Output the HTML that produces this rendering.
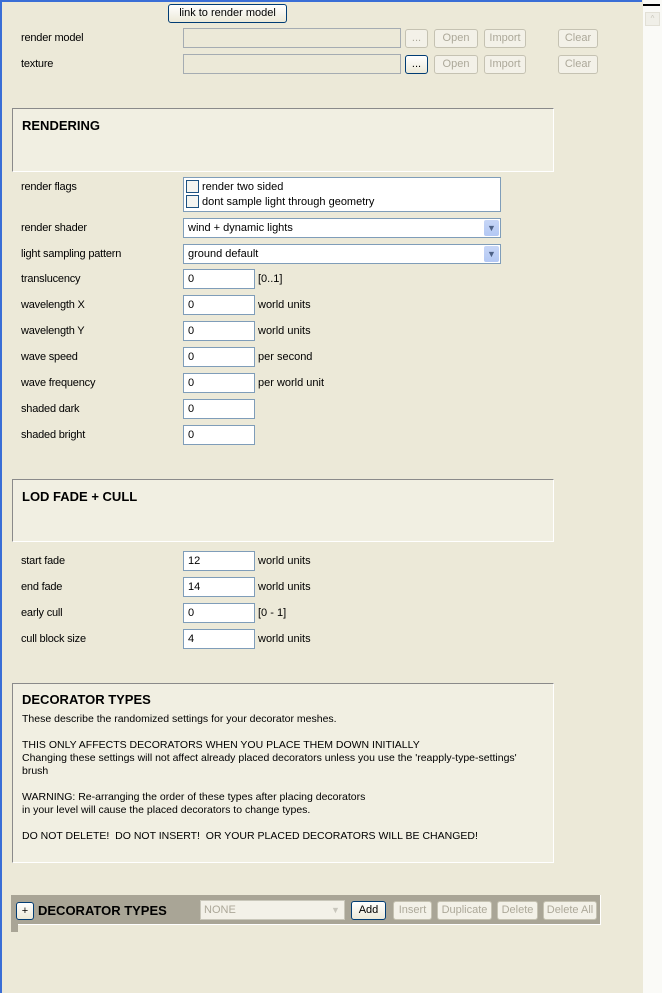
<!DOCTYPE html>
<html><head><meta charset="utf-8"><style>
*{box-sizing:border-box;margin:0;padding:0}
body{width:662px;height:993px;background:#ece9d8;font-family:"Liberation Sans",sans-serif;font-size:11px;color:#000;position:relative;overflow:hidden}
.a{position:absolute}
.lbl{position:absolute;left:21px;font-size:11px;letter-spacing:-0.2px}
.inp{position:absolute;background:#fff;border:1px solid #7f9db9;height:20px;padding:0 4px;font-size:11px;line-height:18px}
.dis{background:#ece9d8;border:1px solid #a5acb2}
.btn{position:absolute;height:19px;border:1px solid #c5c2b2;border-radius:3px;background:#f3f1e8;color:#aca899;text-align:center;line-height:17px;font-size:11px}
.btnA{border:1px solid #003c74;color:#000;background:linear-gradient(#fff,#ece9d8)}
.unit{position:absolute;left:258px;font-size:11px}
.panel{position:absolute;left:12px;width:542px;background:#f1efe2;border-top:1px solid #8a8a8a;border-left:1px solid #8a8a8a;border-right:1px solid #fff;border-bottom:1px solid #fff}
.panel h2{font-size:13px;font-weight:bold;position:absolute;left:9px;top:9px}
.sel{position:absolute;left:183px;width:318px;height:20px;background:#fff;border:1px solid #7f9db9;padding:0 4px;line-height:18px}
.arr{position:absolute;right:1px;top:1px;width:15px;height:16px;background:linear-gradient(#c7d6f6,#b3c8f4);border-radius:2px;color:#4d6185;font-size:9px;text-align:center;line-height:16px}
.cb{display:inline-block;width:13px;height:13px;border:1px solid #1c5180;background:#f4f4f0;vertical-align:-3px;margin-right:3px}
</style></head><body>
<div class="a" style="left:0;top:0;width:2px;height:993px;background:#3a6ed6"></div>
<div class="a" style="left:0;top:0;width:642px;height:2px;background:#3a6ed6"></div>
<div class="a" style="left:643px;top:0;width:19px;height:993px;background:#fafaf7"></div>
<div class="a" style="left:643px;top:4px;width:17px;height:2px;background:#000"></div>
<div class="a" style="left:645px;top:12px;width:15px;height:14px;background:#f0efe8;border:1px solid #e2e0d6;color:#c8c6bc;font-size:8px;text-align:center;line-height:12px">^</div>

<div class="btn btnA" style="left:168px;top:4px;width:119px;height:19px;border-radius:3px">link to render model</div>
<div class="lbl" style="top:32px">render model</div>
<div class="inp dis" style="left:183px;top:28px;width:218px"></div>
<div class="btn" style="left:405px;top:29px;width:23px">...</div>
<div class="btn" style="left:434px;top:29px;width:44px">Open</div>
<div class="btn" style="left:484px;top:29px;width:42px">Import</div>
<div class="btn" style="left:558px;top:29px;width:40px">Clear</div>
<div class="lbl" style="top:58px">texture</div>
<div class="inp dis" style="left:183px;top:54px;width:218px"></div>
<div class="btn btnA" style="left:405px;top:55px;width:23px">...</div>
<div class="btn" style="left:434px;top:55px;width:44px">Open</div>
<div class="btn" style="left:484px;top:55px;width:42px">Import</div>
<div class="btn" style="left:558px;top:55px;width:40px">Clear</div>

<div class="panel" style="top:108px;height:64px"><h2>RENDERING</h2></div>
<div class="lbl" style="top:181px">render flags</div>
<div class="a" style="left:183px;top:177px;width:318px;height:35px;background:#fff;border:1px solid #7f9db9;padding:2px 2px;line-height:15px"><div><span class="cb"></span>render two sided</div><div><span class="cb"></span>dont sample light through geometry</div></div>
<div class="lbl" style="top:222px">render shader</div>
<div class="sel" style="top:218px">wind + dynamic lights<div class="arr">&#9660;</div></div>
<div class="lbl" style="top:248px">light sampling pattern</div>
<div class="sel" style="top:244px">ground default<div class="arr">&#9660;</div></div>

<div class="lbl" style="top:273px">translucency</div><div class="inp" style="left:183px;top:269px;width:72px">0</div><div class="unit" style="top:273px">[0..1]</div>
<div class="lbl" style="top:299px">wavelength X</div><div class="inp" style="left:183px;top:295px;width:72px">0</div><div class="unit" style="top:299px">world units</div>
<div class="lbl" style="top:325px">wavelength Y</div><div class="inp" style="left:183px;top:321px;width:72px">0</div><div class="unit" style="top:325px">world units</div>
<div class="lbl" style="top:351px">wave speed</div><div class="inp" style="left:183px;top:347px;width:72px">0</div><div class="unit" style="top:351px">per second</div>
<div class="lbl" style="top:377px">wave frequency</div><div class="inp" style="left:183px;top:373px;width:72px">0</div><div class="unit" style="top:377px">per world unit</div>
<div class="lbl" style="top:403px">shaded dark</div><div class="inp" style="left:183px;top:399px;width:72px">0</div>
<div class="lbl" style="top:429px">shaded bright</div><div class="inp" style="left:183px;top:425px;width:72px">0</div>

<div class="panel" style="top:479px;height:63px"><h2>LOD FADE + CULL</h2></div>
<div class="lbl" style="top:555px">start fade</div><div class="inp" style="left:183px;top:551px;width:72px">12</div><div class="unit" style="top:555px">world units</div>
<div class="lbl" style="top:581px">end fade</div><div class="inp" style="left:183px;top:577px;width:72px">14</div><div class="unit" style="top:581px">world units</div>
<div class="lbl" style="top:607px">early cull</div><div class="inp" style="left:183px;top:603px;width:72px">0</div><div class="unit" style="top:607px">[0 - 1]</div>
<div class="lbl" style="top:633px">cull block size</div><div class="inp" style="left:183px;top:629px;width:72px">4</div><div class="unit" style="top:633px">world units</div>

<div class="panel" style="top:683px;height:180px"><h2 style="top:8px">DECORATOR TYPES</h2>
<div class="a" style="left:9px;top:29px;line-height:13px;font-size:10.5px">These describe the randomized settings for your decorator meshes.<br><br>THIS ONLY AFFECTS DECORATORS WHEN YOU PLACE THEM DOWN INITIALLY<br>Changing these settings will not affect already placed decorators unless you use the 'reapply-type-settings'<br>brush<br><br>WARNING: Re-arranging the order of these types after placing decorators<br>in your level will cause the placed decorators to change types.<br><br>DO NOT DELETE!&nbsp; DO NOT INSERT!&nbsp; OR YOUR PLACED DECORATORS WILL BE CHANGED!</div></div>

<div class="a" style="left:11px;top:895px;width:590px;height:30px;background:#a9a596;border-right:1px solid #fff;border-bottom:1px solid #fff"></div>
<div class="a" style="left:11px;top:924px;width:7px;height:8px;background:#a9a596"></div>
<div class="btn btnA" style="left:16px;top:902px;width:18px;height:18px;line-height:16px">+</div>
<div class="a" style="left:38px;top:903px;font-size:13px;font-weight:bold">DECORATOR TYPES</div>
<div class="a" style="left:200px;top:900px;width:145px;height:20px;background:#f3f1e8;border:1px solid #c9c7ba;color:#aca899;padding:0 3px;line-height:18px">NONE<div class="a" style="right:1px;top:1px;width:15px;height:16px;color:#c8c6bc;font-size:9px;text-align:center;line-height:16px">&#9660;</div></div>
<div class="btn btnA" style="left:351px;top:901px;width:35px">Add</div>
<div class="btn" style="left:393px;top:901px;width:39px">Insert</div>
<div class="btn" style="left:437px;top:901px;width:55px">Duplicate</div>
<div class="btn" style="left:497px;top:901px;width:41px">Delete</div>
<div class="btn" style="left:543px;top:901px;width:54px">Delete All</div>
</body></html>
